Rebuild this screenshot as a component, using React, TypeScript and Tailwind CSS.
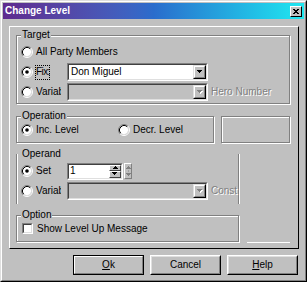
import React from "react";

type Kids = { className?: string; inner?: string; children?: React.ReactNode };

function Radio({ checked = false }: { checked?: boolean }) {
  return (
    <svg width="12" height="12" viewBox="0 0 12 12" className="block shrink-0">
      <circle cx="6" cy="6" r="4.2" fill="#fff" />
      <path d="M2.11 9.89A5.5 5.5 0 0 1 9.89 2.11" fill="none" stroke="#808080" />
      <path d="M9.89 2.11A5.5 5.5 0 0 1 2.11 9.89" fill="none" stroke="#fff" />
      <path d="M2.82 9.18A4.5 4.5 0 0 1 9.18 2.82" fill="none" stroke="#000" />
      <path d="M9.18 2.82A4.5 4.5 0 0 1 2.82 9.18" fill="none" stroke="#dfdfdf" />
      {checked && <circle cx="6" cy="6" r="1.8" fill="#000" />}
    </svg>
  );
}

function Sunken({ className = "", inner = "", children }: Kids) {
  return (
    <div className={`border border-t-[#808080] border-l-[#808080] border-b-white border-r-white ${className}`}>
      <div className={`h-full w-full border border-t-[#404040] border-l-[#404040] border-b-[#dfdfdf] border-r-[#dfdfdf] ${inner}`}>
        {children}
      </div>
    </div>
  );
}

function Raised({ className = "", children }: Kids) {
  return (
    <div className={`border border-t-[#dfdfdf] border-l-[#dfdfdf] border-b-black border-r-black bg-[#c0c0c0] ${className}`}>
      <div className="h-full w-full border border-t-white border-l-white border-b-[#808080] border-r-[#808080] flex items-center justify-center">
        {children}
      </div>
    </div>
  );
}

function Down({ disabled = false }: { disabled?: boolean }) {
  return (
    <svg width="6" height="4" viewBox="0 0 6 4" shapeRendering="crispEdges" className="block">
      {disabled && <path d="M1 1h5v1H1zM2 2h3v1H2zM3 3h1v1H3z" fill="#fff" />}
      <path d="M0 0h5v1H0zM1 1h3v1H1zM2 2h1v1H2z" fill={disabled ? "#808080" : "#000"} />
    </svg>
  );
}

function Up() {
  return (
    <svg width="5" height="3" viewBox="0 0 5 3" shapeRendering="crispEdges" className="block">
      <path d="M2 0h1v1H2zM1 1h3v1H1zM0 2h5v1H0z" fill="#000" />
    </svg>
  );
}

function Combo({ text = "", disabled = false }: { text?: string; disabled?: boolean }) {
  return (
    <Sunken className="w-[141px] h-[18px]" inner={`flex ${disabled ? "bg-[#c0c0c0]" : "bg-white"}`}>
      <span className="flex-1 self-center pl-[2px] whitespace-nowrap">{text}</span>
      <Raised className="w-[13px] h-full">
        <Down disabled={disabled} />
      </Raised>
    </Sunken>
  );
}

function Group({ label, className = "", children }: { label?: string; className?: string; children?: React.ReactNode }) {
  return (
    <div className={`relative border border-[#808080] shadow-[1px_1px_0_#fff,inset_1px_1px_0_#fff] ${className}`}>
      {label && (
        <span className="absolute left-[4px] top-[-6px] px-[1px] bg-[#c0c0c0] leading-none whitespace-nowrap">{label}</span>
      )}
      {children}
    </div>
  );
}

function Dis({ children, className = "" }: { children: React.ReactNode; className?: string }) {
  return (
    <span className={`text-[#808080] [text-shadow:1px_1px_0_#fff] whitespace-nowrap ${className}`}>{children}</span>
  );
}

function Btn({ children, def = false }: { children: React.ReactNode; def?: boolean }) {
  if (def) {
    return (
      <div className="w-[71px] h-[20px] border border-black">
        <div className="h-full w-full border border-t-white border-l-white border-b-[#808080] border-r-[#808080] flex items-center justify-center">
          {children}
        </div>
      </div>
    );
  }
  return (
    <div className="w-[71px] h-[20px] border border-t-white border-l-white border-b-black border-r-black">
      <div className="h-full w-full border border-t-[#dfdfdf] border-l-[#dfdfdf] border-b-[#808080] border-r-[#808080] flex items-center justify-center">
        {children}
      </div>
    </div>
  );
}

export default function App() {
  return (
    <div className="w-[307px] h-[282px] bg-[#c0c0c0] text-[10px] leading-none text-black font-['Liberation_Sans',Arial,sans-serif] border border-t-[#dfdfdf] border-l-[#dfdfdf] border-r-black border-b-black overflow-hidden">
      <div className="h-full border border-t-white border-l-white border-r-[#808080] border-b-[#808080] p-[1px] flex flex-col">
        {/* Title bar */}
        <div className="h-[16px] shrink-0 flex items-center pl-[2px] pr-[2px] bg-linear-to-r from-[#5e2a8e] via-[#2a6ccc] to-[#1fe8f0]">
          <span className="text-white font-bold text-[10px] leading-none">Change Level</span>
          <div className="ml-auto w-[12px] h-[11px] border border-t-white border-l-white border-b-black border-r-black bg-[#c0c0c0] flex items-center justify-center">
            <svg width="6" height="5" viewBox="0 0 6 5" shapeRendering="crispEdges" className="block">
              <path d="M0 0h2v1H0zM4 0h2v1H4zM1 1h4v1H1zM2 2h2v1H2zM1 3h4v1H1zM0 4h2v1H0zM4 4h2v1H4z" fill="#000" />
            </svg>
          </div>
        </div>

        {/* Main panel */}
        <div className="mt-[7px] ml-[6px] w-[290px] h-[223px] shrink-0 border border-t-white border-l-white border-r-black border-b-black pl-[6px] pt-[8px]">
          {/* Target */}
          <Group label="Target" className="w-[274px] h-[69px] flex flex-col gap-[2px] pt-[7px] pl-[4px]">
            <div className="flex items-center h-[18px]">
              <Radio />
              <span className="ml-[3px] whitespace-nowrap">All Party Members</span>
            </div>
            <div className="flex items-center h-[18px]">
              <Radio checked />
              <span className="ml-[2px] w-[15px] h-[15px] border border-dotted border-black flex items-center whitespace-nowrap tracking-[-0.6px]">Fix:</span>
              <div className="ml-[17px]">
                <Combo text="Don Miguel" />
              </div>
            </div>
            <div className="flex items-center h-[18px]">
              <Radio />
              <span className="ml-[3px] w-[25px] overflow-hidden whitespace-nowrap">Variable:</span>
              <div className="ml-[6px]">
                <Combo disabled />
              </div>
              <Dis className="ml-[3px]">Hero Number</Dis>
            </div>
          </Group>

          {/* Operation */}
          <div className="mt-[12px] flex">
            <Group label="Operation" className="w-[198px] h-[27px] flex items-center pl-[4px]">
              <Radio checked />
              <span className="ml-[3px] w-[82px] whitespace-nowrap">Inc. Level</span>
              <Radio />
              <span className="ml-[3px] whitespace-nowrap">Decr. Level</span>
            </Group>
            <Group className="ml-[7px] w-[69px] h-[27px]" />
          </div>

          {/* Operand + Option */}
          <div className="mt-[11px] flex">
            <div className="flex flex-col pb-[1px]">
              <div className="relative w-[223px] h-[50px] border-l border-r border-[#808080] shadow-[1px_0_0_#fff,inset_1px_0_0_#fff] pt-[8px] pl-[4px] flex flex-col gap-[2px]">
                <span className="absolute left-[4px] top-[-5px] px-[1px] bg-[#c0c0c0] leading-none">Operand</span>
                <div className="flex items-center h-[18px]">
                  <Radio checked />
                  <span className="ml-[3px] w-[25px] whitespace-nowrap">Set</span>
                  <div className="ml-[6px] flex items-center">
                    <Sunken className="w-[56px] h-[17px]" inner="flex bg-white">
                      <span className="flex-1 self-center pl-[1px]">1</span>
                      <div className="w-[12px] flex flex-col">
                        <div className="flex-1 border border-t-white border-l-white border-b-[#404040] border-r-[#404040] bg-[#c0c0c0] flex items-center justify-center">
                          <Up />
                        </div>
                        <div className="flex-1 border border-t-white border-l-white border-b-[#404040] border-r-[#404040] bg-[#c0c0c0] flex items-center justify-center">
                          <Down />
                        </div>
                      </div>
                    </Sunken>
                    <div className="ml-[1px] w-[8px] h-[16px] border border-t-white border-l-white border-b-[#808080] border-r-[#808080] flex flex-col items-center justify-center gap-[2px]">
                      <svg width="5" height="10" viewBox="0 0 5 10" shapeRendering="crispEdges" className="block">
                        <path d="M2 0h1v1H2zM1 1h3v1H1zM0 2h5v1H0zM0 7h5v1H0zM1 8h3v1H1zM2 9h1v1H2z" fill="#808080" />
                        <path d="M2 4h1v2H2z" fill="#a0a0a0" />
                      </svg>
                    </div>
                  </div>
                </div>
                <div className="flex items-center h-[18px]">
                  <Radio />
                  <span className="ml-[3px] w-[25px] overflow-hidden whitespace-nowrap">Variable:</span>
                  <div className="ml-[6px]">
                    <Combo disabled />
                  </div>
                  <Dis className="ml-[3px]">Const</Dis>
                </div>
              </div>
              <Group label="Option" className="mt-[11px] w-[223px] h-[27px] flex items-center pl-[5px]">
                <div className="w-[11px] h-[11px] border border-t-[#808080] border-l-[#808080] border-b-white border-r-white">
                  <div className="w-full h-full border border-t-[#404040] border-l-[#404040] border-b-[#dfdfdf] border-r-[#dfdfdf] bg-white" />
                </div>
                <span className="ml-[4px] whitespace-nowrap">Show Level Up Message</span>
              </Group>
            </div>
            <div className="ml-[8px] w-[43px] flex flex-col justify-end">
              <div className="h-[1px] bg-white" />
            </div>
          </div>
        </div>

        {/* Buttons */}
        <div className="mt-[6px] flex justify-end gap-[6px] pr-[6px]">
          <Btn def>
            <span>
              <span className="underline underline-offset-[1px]">O</span>k
            </span>
          </Btn>
          <Btn>
            <span>Cancel</span>
          </Btn>
          <Btn>
            <span>
              <span className="underline underline-offset-[1px]">H</span>elp
            </span>
          </Btn>
        </div>
      </div>
    </div>
  );
}
